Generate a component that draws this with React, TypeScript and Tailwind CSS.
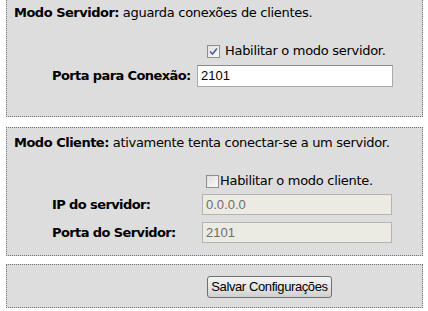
import type { ReactNode } from "react";

function Checkbox({ checked }: { checked?: boolean }) {
  return (
    <span className="relative flex h-[13px] w-[13px] shrink-0 items-center justify-center border border-[#8e8f8f] bg-gradient-to-br from-[#dcdcdc] to-[#fbfbfb]">
      <span className="absolute inset-px border border-[#f4f4f4]/60" />
      {checked && (
        <svg width="9" height="9" viewBox="0 0 9 9" className="relative">
          <path d="M1 4.5 L3.5 7 L8 1.5" fill="none" stroke="#4a5f97" strokeWidth="1.6" />
        </svg>
      )}
    </span>
  );
}

function Box({ className, children }: { className?: string; children: ReactNode }) {
  return (
    <div className={`w-[417px] border border-dotted border-[#6f6f6f] bg-[#dddddd] px-[7px] ${className ?? ""}`}>
      {children}
    </div>
  );
}

function TextInput({ value, disabled, className }: { value: string; disabled?: boolean; className?: string }) {
  return (
    <div
      className={`flex items-center border px-[3px] font-['Liberation_Sans',Arial,sans-serif] text-[13px] tracking-normal ${
        disabled
          ? "border-[#b5b5b0] bg-[#ebebe4] text-[#6d6d6d]"
          : "border-[#a9a9a9] border-t-[#8a8a8a] bg-white text-black"
      } ${className ?? ""}`}
    >
      {value}
    </div>
  );
}

export default function App() {
  return (
    <div className="min-h-[311px] whitespace-nowrap bg-white px-[6px] font-['DejaVu_Sans',Verdana,sans-serif] text-[13px] leading-4 tracking-[-0.3px] text-black">
      {/* servidor */}
      <Box className="-mt-[4px] pt-[8px] pb-[29px]">
        <p className="h-4">
          <b className="tracking-[-0.5px]">Modo Servidor:</b> aguarda conexões de clientes.
        </p>
        <div className="mt-[22px] flex h-4 items-center gap-[5px] pl-[193px]">
          <Checkbox checked />
          <span>Habilitar o modo servidor.</span>
        </div>
        <div className="mt-[6px] flex items-center pl-[38px]">
          <span className="w-[145px] font-bold tracking-[-0.6px]">Porta para Conexão:</span>
          <TextInput value="2101" className="h-[22px] w-[196px]" />
        </div>
      </Box>

      {/* cliente */}
      <Box className="mt-[10px] pt-[7px] pb-[12px]">
        <p className="h-4">
          <b className="tracking-[-0.5px]">Modo Cliente:</b> ativamente tenta conectar-se a um servidor.
        </p>
        <div className="mt-[22px] flex h-4 items-center gap-[1px] pl-[192px]">
          <Checkbox />
          <span>Habilitar o modo cliente.</span>
        </div>
        <div className="mt-[5px] flex items-center pl-[38px]">
          <span className="w-[150px] font-bold tracking-[-0.6px]">IP do servidor:</span>
          <TextInput value="0.0.0.0" disabled className="h-[21px] w-[190px]" />
        </div>
        <div className="mt-[7px] flex items-center pl-[38px]">
          <span className="w-[150px] font-bold tracking-[-0.6px]">Porta do Servidor:</span>
          <TextInput value="2101" disabled className="h-[21px] w-[190px]" />
        </div>
      </Box>

      {/* salvar */}
      <Box className="mt-[8px] pt-[11px] pb-[9px]">
        <div className="pl-[193px]">
          <button
            type="button"
            className="flex h-[22px] w-[125px] items-center justify-center rounded-[3px] border border-[#707070] bg-gradient-to-b from-[#f3f3f3] via-[#e6e6e6] to-[#cfcfcf] font-['Liberation_Sans',Arial,sans-serif] text-[13px] tracking-[-0.4px] text-black"
          >
            Salvar Configurações
          </button>
        </div>
      </Box>
    </div>
  );
}
